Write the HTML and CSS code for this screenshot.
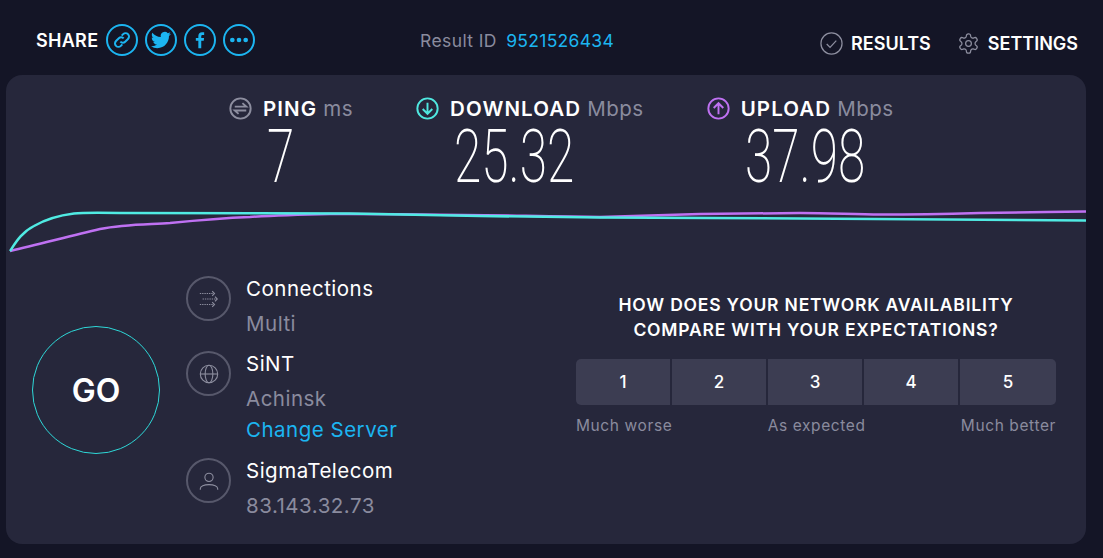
FILE: index.html
```html
<!DOCTYPE html>
<html lang="en">
  <head>
    <meta charset="UTF-8" />
    <title>Speedtest Result</title>
    <link rel="stylesheet" href="styles.css">
  </head>
  <body>
    <header class="topbar">
      <div class="share">
        <span class="share-label">SHARE</span>
        <a class="share-btn"><svg viewBox="0 0 24 24" class="line-icon"><path d="M10 14a4 4 0 0 0 5.800.200l3.400-3.400a4.100 4.100 0 0 0-5.800-5.800l-1.800 1.800"/><path d="M14 10a4 4 0 0 0-5.800-.200l-3.400 3.400a4.100 4.100 0 0 0 5.800 5.800l1.800-1.800"/></svg></a>
        <a class="share-btn"><svg viewBox="0 0 24 24" class="fill-icon"><path d="M23.953 4.57a10 10 0 01-2.825.775 4.958 4.958 0 002.163-2.723c-.951.555-2.005.959-3.127 1.184a4.92 4.92 0 00-8.384 4.482C7.69 8.095 4.067 6.13 1.64 3.162a4.822 4.822 0 00-.666 2.475c0 1.71.87 3.213 2.188 4.096a4.904 4.904 0 01-2.228-.616v.06a4.923 4.923 0 003.946 4.827 4.996 4.996 0 01-2.212.085 4.936 4.936 0 004.604 3.417 9.867 9.867 0 01-6.102 2.105c-.39 0-.779-.023-1.17-.067a13.995 13.995 0 007.557 2.209c9.053 0 13.998-7.496 13.998-13.985 0-.21 0-.42-.015-.63A9.935 9.935 0 0024 4.59z"/></svg></a>
        <a class="share-btn"><svg viewBox="0 0 24 24" class="fill-icon"><path d="M13.500 22v-9h3l.4-3.500h-3.400V7.600c0-1 .3-1.700 1.700-1.700h1.800V2.700c-.3 0-1.400-.1-2.600-.1-2.600 0-4.400 1.600-4.400 4.500v2.400H7V13h3v9z"/></svg></a>
        <a class="share-btn"><svg viewBox="0 0 24 24" class="fill-icon"><circle cx="4" cy="12" r="2.800"/><circle cx="12" cy="12" r="2.800"/><circle cx="20" cy="12" r="2.800"/></svg></a>
      </div>
      <div class="result-id">Result ID <a>9521526434</a></div>
      <nav class="nav">
        <a class="nav-item">
          <svg viewBox="0 0 24 24" class="nav-icon"><circle cx="12" cy="12" r="11"/><path d="M7 12.500l3.500 3.500 6.500-7"/></svg>
          RESULTS
        </a>
        <a class="nav-item">
          <svg viewBox="0 0 24 24" class="nav-icon"><path d="M12.220 2h-.44a2 2 0 0 0-2 2v.18a2 2 0 0 1-1 1.730l-.43.250a2 2 0 0 1-2 0l-.15-.08a2 2 0 0 0-2.730.730l-.22.380a2 2 0 0 0 .730 2.730l.15.100a2 2 0 0 1 1 1.720v.510a2 2 0 0 1-1 1.740l-.15.090a2 2 0 0 0-.730 2.730l.22.380a2 2 0 0 0 2.730.730l.15-.08a2 2 0 0 1 2 0l.43.250a2 2 0 0 1 1 1.730V20a2 2 0 0 0 2 2h.44a2 2 0 0 0 2-2v-.18a2 2 0 0 1 1-1.730l.43-.25a2 2 0 0 1 2 0l.15.080a2 2 0 0 0 2.730-.730l.22-.390a2 2 0 0 0-.730-2.730l-.15-.08a2 2 0 0 1-1-1.740v-.5a2 2 0 0 1 1-1.740l.15-.09a2 2 0 0 0 .730-2.730l-.22-.38a2 2 0 0 0-2.730-.730l-.15.080a2 2 0 0 1-2 0l-.43-.25a2 2 0 0 1-1-1.730V4a2 2 0 0 0-2-2z"/><circle cx="12" cy="12" r="3"/></svg>
          SETTINGS
        </a>
      </nav>
    </header>

    <main class="panel">
      <section class="metrics">
        <div class="metric">
          <div class="metric-head">
            <svg viewBox="0 0 24 24" class="metric-icon ping"><circle cx="12" cy="12" r="10.600"/><path d="M6 10h12l-4-3.600M18 14H6l4 3.600"/></svg>
            <b>PING</b> <span class="unit">ms</span>
          </div>
          <div class="metric-value"><span>7</span></div>
        </div>
        <div class="metric">
          <div class="metric-head">
            <svg viewBox="0 0 24 24" class="metric-icon down"><circle cx="12" cy="12" r="10.600"/><path d="M12 6v11.500M7 12.500l5 5 5-5"/></svg>
            <b>DOWNLOAD</b> <span class="unit">Mbps</span>
          </div>
          <div class="metric-value"><span>25.32</span></div>
        </div>
        <div class="metric">
          <div class="metric-head">
            <svg viewBox="0 0 24 24" class="metric-icon up"><circle cx="12" cy="12" r="10.600"/><path d="M12 18V6.500M7 11.500l5-5 5 5"/></svg>
            <b>UPLOAD</b> <span class="unit">Mbps</span>
          </div>
          <div class="metric-value"><span>37.98</span></div>
        </div>
      </section>

      <svg class="graph" viewBox="6 200 1080 60">
        <path class="graph-up" d="M10 251C40 244 70 236 100 229C125 224 150 224.500 170 223C200 220 225 218 250 217C280 215 305 214.500 330 214C420 213.500 520 216 600 217C640 216 670 214.800 700 214C740 213.500 770 213.200 800 213C830 213 855 214.500 880 214.500C915 214.500 950 213.800 980 213C1020 212.300 1050 212 1086 211.500"/>
        <path class="graph-down" d="M10 251C16 242 22 232 34 226C46 219 62 215 74 213.500C82 212.600 92 212.500 120 213L350 213.500C400 214.200 440 215.300 480 216C520 216.800 560 217.300 600 217.500L800 218.500C900 219.200 1000 220 1086 220.500"/>
      </svg>

      <section class="lower">
        <a class="go">GO</a>

        <div class="details">
          <div class="detail">
            <span class="detail-icon"><svg viewBox="0 0 24 24"><path stroke-dasharray="1.500 1" d="M2 6h15M5 12h15M2 18h15"/><path d="M15.500 3.500l2.500 2.500-2.500 2.500M18.500 9.500l2.500 2.500-2.500 2.500M15.500 15.500l2.500 2.500-2.500 2.500"/></svg></span>
            <div class="detail-text">
              <div class="detail-title">Connections</div>
              <div class="detail-sub">Multi</div>
            </div>
          </div>
          <div class="detail">
            <span class="detail-icon"><svg viewBox="0 0 24 24"><circle cx="12" cy="12" r="9.500"/><ellipse cx="12" cy="12" rx="4.200" ry="9.500"/><path d="M2.500 12h19"/></svg></span>
            <div class="detail-text">
              <div class="detail-title">SiNT</div>
              <div class="detail-sub">Achinsk</div>
              <a class="change-server">Change Server</a>
            </div>
          </div>
          <div class="detail">
            <span class="detail-icon"><svg viewBox="0 0 24 24"><circle cx="12" cy="8" r="4.500"/><path d="M2.500 21.500v-1c0-2.500 4-4.500 9.500-4.500s9.500 2 9.500 4.500v1"/></svg></span>
            <div class="detail-text">
              <div class="detail-title">SigmaTelecom</div>
              <div class="detail-sub">83.143.32.73</div>
            </div>
          </div>
        </div>

        <div class="survey">
          <h2 class="survey-title">HOW DOES YOUR NETWORK AVAILABILITY<br>COMPARE WITH YOUR EXPECTATIONS?</h2>
          <div class="scale">
            <button class="scale-btn">1</button>
            <button class="scale-btn">2</button>
            <button class="scale-btn">3</button>
            <button class="scale-btn">4</button>
            <button class="scale-btn">5</button>
          </div>
          <div class="scale-labels">
            <span>Much worse</span>
            <span>As expected</span>
            <span>Much better</span>
          </div>
        </div>
      </section>
    </main>
  </body>
</html>
```

FILE: styles.css
```css
* {
  margin: 0;
  padding: 0;
  box-sizing: border-box;
}
body {
  width: 1103px;
  height: 558px;
  overflow: hidden;
  background: #141526;
  color: #fff;
  font-family: Inter, "Open Sans", sans-serif;
  padding: 0 17px 14px 6px;
}
svg {
  display: block;
  fill: none;
}

/* top bar */
.topbar {
  height: 75px;
  display: grid;
  grid-template-columns: 414px 1fr auto;
  padding-right: 8px;
}
.share {
  display: flex;
  align-items: center;
  height: 80px;
  padding-left: 30px;
  gap: 7px;
}
.share-label {
  font-size: 18px;
  font-weight: 600;
  letter-spacing: 0.300px;
  width: 64px;
  margin-right: -1px;
}
.share-btn {
  width: 32px;
  height: 32px;
  border: 2px solid #1cb5f1;
  border-radius: 50%;
  display: flex;
  align-items: center;
  justify-content: center;
}
.share-btn svg {
  width: 20px;
  height: 20px;
}
.share-btn .fill-icon {
  fill: #1cb5f1;
}
.line-icon {
  stroke: #1cb5f1;
  stroke-width: 2.400;
}
.result-id {
  font-size: 17.500px;
  letter-spacing: 0.400px;
  color: #8a8b9e;
  height: 82px;
  line-height: 82px;
}
.result-id a {
  color: #1cb5f1;
  margin-left: 4px;
  letter-spacing: 0.300px;
}
.nav {
  display: flex;
  align-items: center;
  height: 86px;
  gap: 26px;
}
.nav-item {
  display: flex;
  align-items: center;
  gap: 8px;
  font-size: 18px;
  font-weight: 600;
}
.nav-icon {
  width: 23px;
  height: 23px;
  stroke: #8d8e9f;
  stroke-width: 1.300;
}

/* main panel */
.panel {
  height: 469px;
  background: #26273b;
  border-radius: 16px;
}
.metrics {
  display: flex;
  gap: 63px;
  padding: 20px 0 0 223px;
  height: 125px;
}
.metric-head {
  display: flex;
  align-items: center;
  font-size: 20.500px;
  height: 26px;
  white-space: nowrap;
}
.metric-head b {
  font-weight: 600;
  letter-spacing: 1.100px;
}
.metric-icon {
  width: 23px;
  height: 23px;
  margin-right: 11px;
  stroke-width: 2;
}
.ping {
  stroke: #8d8e9f;
}
.down {
  stroke: #4fe8e0;
}
.up {
  stroke: #bf71f2;
}
.unit {
  color: #8a8b9e;
  margin-left: 6px;
  letter-spacing: 0.500px;
}
.metric-value {
  padding-left: 38px;
  font-family: Roboto, sans-serif;
  font-weight: 200;
  font-size: 74px;
  line-height: 72px;
  height: 72px;
}
.metric-value span {
  display: inline-block;
  transform: scaleX(0.670);
  transform-origin: left center;
}
.graph {
  width: 1080px;
  height: 60px;
}
.graph path {
  stroke-width: 2.500;
}
.graph-up {
  stroke: #bf71f2;
}
.graph-down {
  stroke: #50ebe3;
}

/* lower part */
.lower {
  display: flex;
  align-items: flex-start;
}
.go {
  width: 128px;
  height: 128px;
  margin: 66px 26px 0 26px;
  border: 1px solid #2ed8d8;
  border-radius: 50%;
  display: flex;
  align-items: center;
  justify-content: center;
  font-size: 32px;
  font-weight: 600;
}
.details {
  width: 390px;
  padding-top: 11px;
  display: flex;
  flex-direction: column;
  gap: 5px;
}
.detail {
  display: flex;
  font-size: 20.500px;
  letter-spacing: 0.500px;
  line-height: 35px;
}
.detail-icon {
  width: 45px;
  height: 45px;
  margin: 5px 15px 0 0;
  border: 2px solid #57586b;
  border-radius: 50%;
  display: flex;
  align-items: center;
  justify-content: center;
}
.detail-icon svg {
  width: 22px;
  height: 22px;
  stroke: #8d8e9f;
  stroke-width: 1.200;
}
.detail-sub {
  color: #8a8b9e;
}
.change-server {
  display: block;
  color: #1cb5f1;
  line-height: 27px;
  margin-bottom: 5px;
}
.survey {
  width: 480px;
  padding-top: 32px;
}
.survey-title {
  font-size: 17.500px;
  font-weight: 600;
  letter-spacing: 0.800px;
  line-height: 25px;
  text-align: center;
  white-space: nowrap;
}
.scale {
  display: flex;
  gap: 2px;
  margin-top: 17px;
}
.scale-btn {
  width: 94px;
  height: 46px;
  background: #3c3d52;
  border: 0;
  color: #fff;
  font-family: inherit;
  font-size: 17px;
  font-weight: 500;
}
.scale-btn:first-child {
  border-radius: 5px 0 0 5px;
}
.scale-btn:last-child {
  width: 96px;
  border-radius: 0 5px 5px 0;
}
.scale-labels {
  display: flex;
  justify-content: space-between;
  margin-top: 11px;
  font-size: 15.500px;
  letter-spacing: 0.600px;
  line-height: 20px;
  color: #8a8b9e;
}
```
